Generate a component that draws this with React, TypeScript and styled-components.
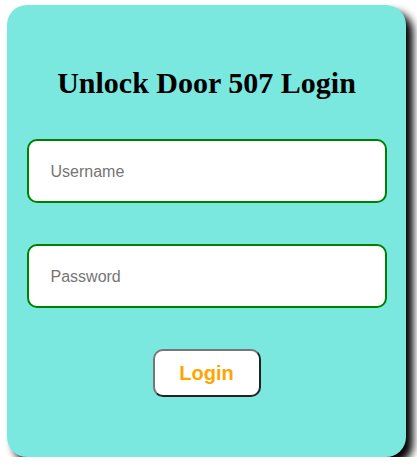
import styled, { createGlobalStyle } from 'styled-components'

const GlobalStyle = createGlobalStyle`
  html, body {
    margin: 0;
    padding: 0;
    background: #ffffff;
  }
  body {
    padding: 5px 0 0 7px;
    font-family: "Liberation Sans", Arial, sans-serif;
  }
`

const Card = styled.div`
  box-sizing: border-box;
  width: 399px;
  height: 452px;
  padding: 20px;
  background: #7ae8de;
  border-radius: 20px;
  box-shadow: 7px 7px 8px #000;
  display: flex;
  flex-direction: column;
  align-items: center;
`

const Title = styled.h1`
  margin: 41px 0 39px;
  font-family: "Liberation Serif", "Times New Roman", serif;
  font-size: 30px;
  font-weight: bold;
  color: #000;
  text-align: center;
`

const Field = styled.input`
  box-sizing: border-box;
  width: 360px;
  height: 64px;
  margin: 0 0 41px;
  padding: 1px 22px 0;
  border: 2px solid #008000;
  border-radius: 10px;
  background: #fff;
  font-family: "Liberation Sans", Arial, sans-serif;
  font-size: 16px;
  color: #222;
  outline: none;
  &::placeholder {
    color: #757575;
  }
`

const LoginButton = styled.button`
  box-sizing: border-box;
  width: 108px;
  height: 48px;
  background: #fff;
  border: 2px solid;
  border-color: #767676 #222 #222 #767676;
  border-radius: 10px;
  color: #ffa500;
  font-family: "Liberation Sans", Arial, sans-serif;
  font-size: 20px;
  font-weight: bold;
  cursor: pointer;
`

export default function App() {
  return (
    <>
      <GlobalStyle />
      <Card>
        <Title>Unlock Door 507 Login</Title>
        <Field type="text" placeholder="Username" />
        <Field type="password" placeholder="Password" />
        <LoginButton>Login</LoginButton>
      </Card>
    </>
  )
}
